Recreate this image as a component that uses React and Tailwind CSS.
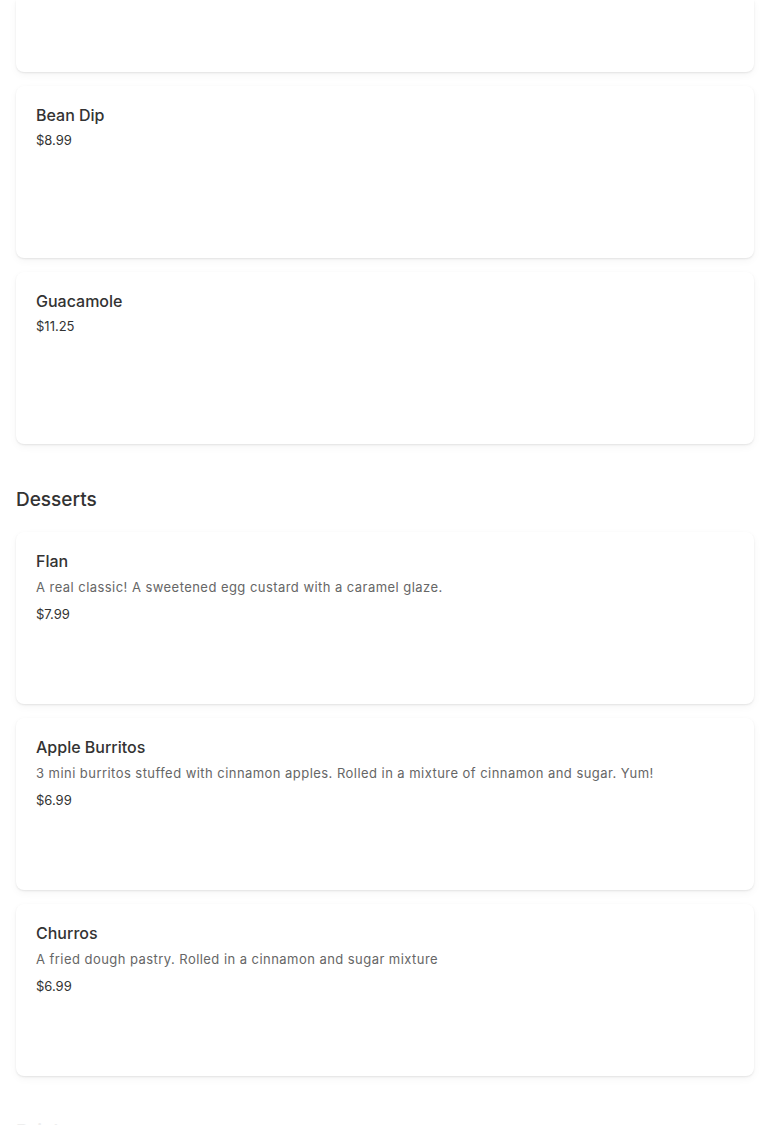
import React from 'react';

const appetizers = [
    { name: 'Bean Dip', price: '$8.99' },
    { name: 'Guacamole', price: '$11.25' },
];

const desserts = [
    { name: 'Flan', description: 'A real classic! A sweetened egg custard with a caramel glaze.', price: '$7.99' },
    { name: 'Apple Burritos', description: '3 mini burritos stuffed with cinnamon apples. Rolled in a mixture of cinnamon and sugar. Yum!', price: '$6.99' },
    { name: 'Churros', description: 'A fried dough pastry. Rolled in a cinnamon and sugar mixture', price: '$6.99' },
];

const cardShadow = 'shadow-[0_1px_2px_rgba(0,0,0,0.09),0_3px_8px_rgba(0,0,0,0.04)]';

const MenuItemCard = ({ item }) => (
    <div className={`bg-white rounded-lg h-[172px] px-5 pt-[17px] ${cardShadow}`}>
        <h3 className="text-[16px] leading-6 font-medium text-[#333]">{item.name}</h3>
        {item.description && (
            <p className="mt-[4px] text-[13px] leading-5 text-[#666] tracking-[0.45px]">{item.description}</p>
        )}
        <p className={`${item.description ? 'mt-[7px]' : 'mt-[3px]'} text-[13px] leading-5 text-[#333]`}>{item.price}</p>
    </div>
);

export default function App() {
    return (
        <div className="min-h-screen bg-white overflow-hidden font-['Inter','Liberation_Sans',sans-serif]">
            <div className="px-4">
                {/* tail of the card scrolled above */}
                <div className="flex flex-col gap-[14px]">
                    <div className={`bg-white rounded-b-lg h-[72px] ${cardShadow}`} />
                    {appetizers.map((item) => (
                        <MenuItemCard key={item.name} item={item} />
                    ))}
                </div>

                <section className="mt-[42px]">
                    <h2 className="text-[19px] leading-7 font-medium text-[#333] mb-[18px]">Desserts</h2>
                    <div className="flex flex-col gap-[14px]">
                        {desserts.map((item) => (
                            <MenuItemCard key={item.name} item={item} />
                        ))}
                    </div>
                </section>

                <section className="mt-[42px]">
                    <h2 className="text-[19px] leading-7 font-medium text-[#eeeeee]">Drinks</h2>
                </section>
            </div>
        </div>
    );
}
